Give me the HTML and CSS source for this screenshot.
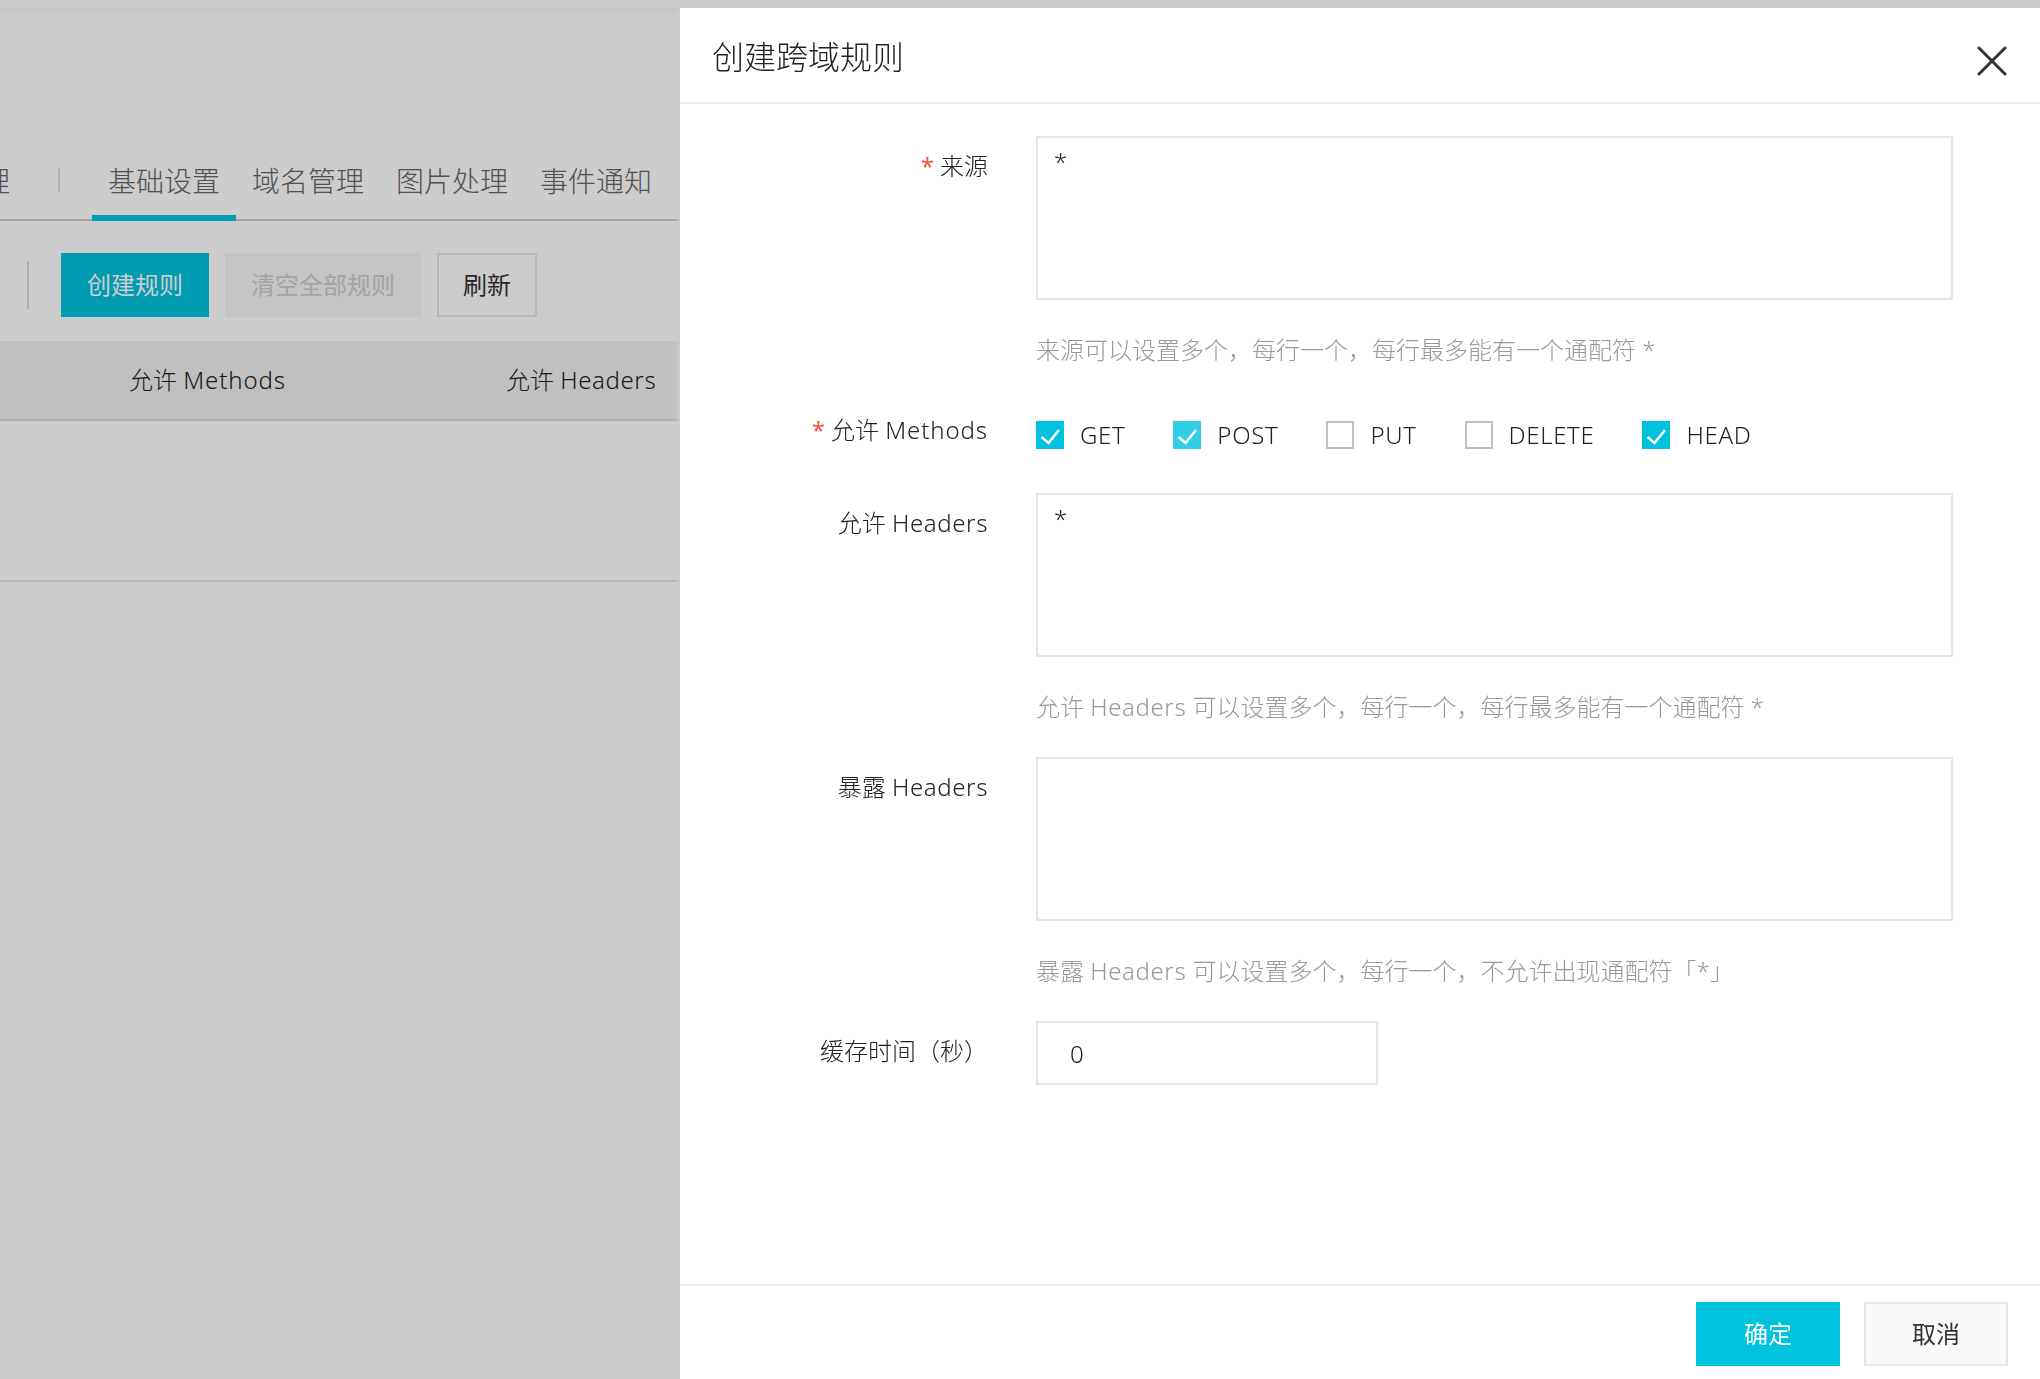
FILE: index.html
```html
<!DOCTYPE html>
<html lang="zh-CN">

<head>
  <meta charset="UTF-8">
  <title>创建跨域规则</title>
  <link rel="stylesheet" href="styles.css">
</head>

<body>
  <div class="page">
    <div class="topbar"></div>

    <div class="tabs">
      <a class="tab">文件管理</a>
      <span class="tabs-line"></span>
      <a class="tab is-active">基础设置</a>
      <a class="tab">域名管理</a>
      <a class="tab">图片处理</a>
      <a class="tab">事件通知</a>
    </div>

    <div class="toolbar">
      <span class="toolbar-line"></span>
      <a class="btn btn-primary">创建规则</a>
      <a class="btn btn-disabled">清空全部规则</a>
      <a class="btn btn-normal">刷新</a>
    </div>

    <div class="table-head">
      <div>允许 <span class="en-methods">Methods</span></div>
      <div>允许 <span class="en">Headers</span></div>
    </div>
    <div class="table-row"></div>
  </div>

  <div class="mask"></div>

  <!-- panel -->
  <div class="panel">
    <div class="panel-head">
      <div class="panel-ttl">创建跨域规则</div>
      <a class="panel-close">
        <svg width="30" height="30" viewBox="0 0 30 30">
          <path d="M2 2 L28 28 M28 2 L2 28" fill="none" stroke="#333" stroke-width="3" stroke-linecap="round" />
        </svg>
      </a>
    </div>

    <div class="panel-body">
      <div class="form-row has-help">
        <label class="form-label"><span class="req">*</span>来源</label>
        <div class="form-ctrl">
          <textarea class="field-area">*</textarea>
          <p class="form-help">来源可以设置多个，每行一个，每行最多能有一个通配符 *</p>
        </div>
      </div>

      <div class="form-row row-methods">
        <label class="form-label"><span class="req">*</span>允许 <span class="en-methods">Methods</span></label>
        <div class="checks">
          <label class="check">
            <span class="check-box is-on">
              <svg width="28" height="28" viewBox="0 0 28 28"><path d="M5.5 16 L12.5 22 L23 9" fill="none" stroke="#fff" stroke-width="2.5" /></svg>
            </span>GET
          </label>
          <label class="check">
            <span class="check-box is-on is-hover">
              <svg width="28" height="28" viewBox="0 0 28 28"><path d="M5.5 16 L12.5 22 L23 9" fill="none" stroke="#fff" stroke-width="2.5" /></svg>
            </span>POST
          </label>
          <label class="check"><span class="check-box"></span>PUT</label>
          <label class="check"><span class="check-box"></span>DELETE</label>
          <label class="check">
            <span class="check-box is-on">
              <svg width="28" height="28" viewBox="0 0 28 28"><path d="M5.5 16 L12.5 22 L23 9" fill="none" stroke="#fff" stroke-width="2.5" /></svg>
            </span>HEAD
          </label>
        </div>
      </div>

      <div class="form-row has-help">
        <label class="form-label">允许 <span class="en">Headers</span></label>
        <div class="form-ctrl">
          <textarea class="field-area">*</textarea>
          <p class="form-help">允许 <span class="en">Headers</span> 可以设置多个，每行一个，每行最多能有一个通配符 *</p>
        </div>
      </div>

      <div class="form-row has-help">
        <label class="form-label">暴露 <span class="en">Headers</span></label>
        <div class="form-ctrl">
          <textarea class="field-area"></textarea>
          <p class="form-help">暴露 <span class="en">Headers</span> 可以设置多个，每行一个，不允许出现通配符「*」</p>
        </div>
      </div>

      <div class="form-row">
        <label class="form-label">缓存时间（秒）</label>
        <div class="form-ctrl">
          <input class="field-input" type="text" value="0">
        </div>
      </div>
    </div>

    <div class="panel-foot">
      <a class="btn btn-ok">确定</a>
      <a class="btn btn-cancel">取消</a>
    </div>
  </div>
  <!-- panel -->
</body>

</html>
```

FILE: styles.css
```css
html,
body {
  height: 100%;
}

body {
  margin: 0;
  overflow: hidden;
  font-family: "Noto Sans", "Noto Sans CJK SC", sans-serif;
  font-size: 24px;
  font-weight: 300;
  color: #222;
  background: #fff;
}

a {
  text-decoration: none;
}

.en {
  letter-spacing: 0.6px;
}

.en-methods {
  letter-spacing: 0.9px;
}

.page {
  width: 680px;
  overflow: hidden;
}

.topbar {
  height: 8px;
  box-shadow: 0 2px 8px rgba(0, 0, 0, 0.08);
}

.tabs {
  display: flex;
  justify-content: flex-end;
  align-items: center;
  height: 78px;
  margin-top: 133px;
  padding-right: 12px;
  border-bottom: 2px solid #ccc;
}

.tab {
  position: relative;
  flex: none;
  padding: 2px 16px 0;
  font-size: 28px;
  line-height: 76px;
  color: #666;
}

.tab.is-active::after {
  content: "";
  position: absolute;
  left: 0;
  right: 0;
  bottom: -2px;
  height: 6px;
  background: #00c1de;
}

.tabs-line {
  flex: none;
  width: 2px;
  height: 24px;
  margin: 0 32px;
  background: #ddd;
}

.toolbar {
  display: flex;
  align-items: center;
  gap: 16px;
  margin-top: 32px;
  padding-left: 27px;
}

.toolbar-line {
  width: 2px;
  height: 48px;
  margin-right: 16px;
  background: #ddd;
}

.btn {
  box-sizing: border-box;
  display: block;
  height: 64px;
  padding: 0 26px;
  font-weight: 400;
  line-height: 64px;
  text-align: center;
}

.btn-primary {
  color: #fff;
  background: #00c1de;
}

.btn-disabled {
  color: #ccc;
  background: #f5f5f5;
}

.btn-normal {
  padding: 0 24px;
  line-height: 60px;
  color: #333;
  border: 2px solid #e5e5e5;
}

.table-head {
  box-sizing: border-box;
  display: grid;
  grid-template-columns: 377px auto;
  height: 80px;
  margin-top: 24px;
  padding-left: 129px;
  line-height: 78px;
  background: #f0f0f0;
  border-bottom: 2px solid #ddd;
}

.table-row {
  height: 159px;
  border-bottom: 2px solid #e5e5e5;
}

.mask {
  position: fixed;
  top: 0;
  left: 0;
  width: 100%;
  height: 100%;
  background: rgba(0, 0, 0, 0.2);
}

.panel {
  position: fixed;
  top: 8px;
  left: 680px;
  right: 0;
  bottom: 0;
  display: flex;
  flex-direction: column;
  background: #fff;
  box-shadow: -2px 0 4px #ccc;
}

.panel-head {
  display: flex;
  justify-content: space-between;
  align-items: center;
  flex: none;
  height: 94px;
  padding: 0 33px 0 32px;
  border-bottom: 2px solid #eee;
}

.panel-ttl {
  margin-top: 3px;
  font-size: 32px;
  line-height: 44px;
}

.panel-close {
  display: block;
  height: 30px;
  margin-top: 12px;
}

.panel-body {
  flex: 1;
  padding-top: 32px;
}

.form-row {
  display: flex;
  column-gap: 48px;
}

.form-label {
  flex: none;
  width: 308px;
  line-height: 60px;
  text-align: right;
}

.req {
  margin-right: 6px;
  font-weight: 400;
  color: #f4533c;
}

.form-ctrl {
  width: 917px;
}

.form-help {
  height: 36px;
  margin: 32px 0;
  line-height: 36px;
  color: #999;
}

.field-area {
  box-sizing: border-box;
  display: block;
  width: 100%;
  height: 164px;
  padding: 8px 16px;
  font: inherit;
  line-height: 32px;
  color: #222;
  border: 2px solid #e5e5e5;
  border-radius: 0;
  outline: none;
  resize: none;
}

.field-input {
  box-sizing: border-box;
  display: block;
  width: 342px;
  height: 64px;
  padding: 0 32px;
  font: inherit;
  color: #222;
  border: 2px solid #e5e5e5;
  border-radius: 0;
  outline: none;
}

.row-methods {
  height: 93px;
}

.checks {
  display: flex;
  align-items: center;
  gap: 48px;
  height: 70px;
}

.check {
  display: flex;
  align-items: center;
  gap: 16px;
  letter-spacing: 0.65px;
  line-height: 32px;
}

.check-box {
  box-sizing: border-box;
  display: block;
  width: 28px;
  height: 28px;
  border: 2px solid #c0c0c0;
}

.check-box.is-on {
  background: #00c1de;
  border: none;
}

.check-box.is-hover {
  background: #33cde5;
}

.check-box svg {
  display: block;
}

.panel-foot {
  display: flex;
  justify-content: flex-end;
  gap: 24px;
  flex: none;
  padding: 16px 32px 13px;
  border-top: 2px solid #eee;
}

.btn-ok,
.btn-cancel {
  width: 144px;
  padding: 0;
}

.btn-ok {
  color: #fff;
  background: #00c1de;
}

.btn-cancel {
  line-height: 60px;
  color: #333;
  background: #f9f9f9;
  border: 2px solid #e5e5e5;
}
```
